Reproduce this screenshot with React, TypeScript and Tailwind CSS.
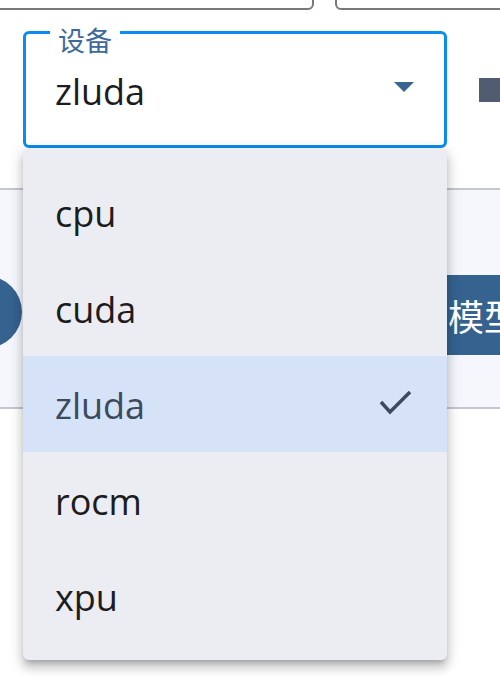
import { useState } from 'react'

const devices = ['cpu', 'cuda', 'zluda', 'rocm', 'xpu']

export default function App() {
  const [device, setDevice] = useState('zluda')

  return (
    <div className="relative w-[500px] h-[692px] overflow-hidden bg-white font-['Open_Sans','Noto_Sans_CJK_SC',sans-serif]">
      {/* inputs above, cut off by the top edge */}
      <div className="flex -mt-[30px]">
        <div className="w-[324px] h-[40px] -ml-[10px] shrink-0 rounded-b-[6px] border-2 border-[#78787f]" />
        <div className="w-[200px] h-[40px] ml-[21px] shrink-0 rounded-bl-[6px] border-2 border-[#78787f]" />
      </div>

      <div className="flex items-center mt-[21px]">
        <div className="relative ml-[23px] w-[424px] h-[117px] shrink-0 rounded-[6px] border-[3px] border-[#0a8cf0] flex items-center pl-[29px] pr-[30px]">
          <span className="absolute -top-[8px] left-[24px] px-[8px] bg-white text-[27px] leading-[28px] text-[#3d6a9a] font-['Noto_Sans_CJK_SC',sans-serif]">
            设备
          </span>
          <span className="flex-1 text-[36px] text-[#1c1c20] mt-[4px]">{device}</span>
          <svg width="20" height="10" viewBox="0 0 20 10" className="shrink-0 -mt-[6px]">
            <polygon points="0,0 20,0 10,10" fill="#3a6590" />
          </svg>
        </div>
        <div className="ml-[32px] w-[30px] h-[24px] bg-[#525c70] shrink-0" />
      </div>

      {/* panel behind the menu */}
      <div className="mt-[40px] h-[221px] border-y-2 border-[#c5c6d0] bg-[#f6f7fc] flex items-start pt-[85px]">
        <div className="-ml-[50px] mt-[1px] w-[72px] h-[72px] rounded-full bg-[#35628f] shrink-0" />
        <button className="ml-auto -mr-[60px] shrink-0 h-[80px] pl-[24px] pr-[40px] bg-[#35628f] text-white text-[36px] font-['Noto_Sans_CJK_SC',sans-serif]">
          浏览模型
        </button>
      </div>

      {/* open select menu */}
      <ul className="absolute left-[23px] top-[148px] w-[424px] py-[16px] rounded-[6px] bg-[#ecedf2] shadow-[0_5px_5px_-3px_rgba(0,0,0,0.2),0_8px_10px_1px_rgba(0,0,0,0.14),0_3px_14px_2px_rgba(0,0,0,0.12)]">
        {devices.map((d) => {
          const selected = d === device
          return (
            <li
              key={d}
              onClick={() => setDevice(d)}
              className={
                selected
                  ? 'h-[96px] flex items-center justify-between pl-[32px] pr-[34px] bg-[#d6e2f7] text-[#3b4a5c] text-[36px] cursor-pointer'
                  : 'h-[96px] flex items-center justify-between pl-[32px] pr-[34px] text-[#1c1c20] text-[36px] cursor-pointer'
              }
            >
              <span className="mt-[4px]">{d}</span>
              {selected && (
                <svg width="34" height="26" viewBox="0 0 34 26" className="shrink-0">
                  <polyline points="2,11 11,21 31,1" fill="none" stroke="#3b4a5e" strokeWidth="3.5" />
                </svg>
              )}
            </li>
          )
        })}
      </ul>
    </div>
  )
}
